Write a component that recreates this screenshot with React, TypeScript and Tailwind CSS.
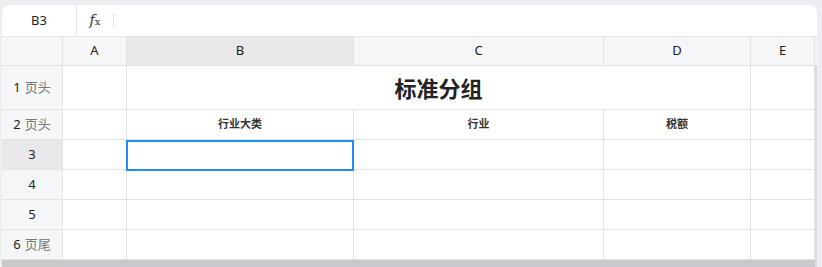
import React from "react";

const cols = [
  { key: "A", w: 64 },
  { key: "B", w: 227 },
  { key: "C", w: 250 },
  { key: "D", w: 147 },
  { key: "E", w: 64 },
];

const rows = [
  { n: "1", label: "页头", h: 44 },
  { n: "2", label: "页头", h: 30 },
  { n: "3", label: "", h: 30 },
  { n: "4", label: "", h: 30 },
  { n: "5", label: "", h: 30 },
  { n: "6", label: "页尾", h: 30 },
];

export default function App() {
  const font = { fontFamily: '"Noto Sans", "Noto Sans CJK SC", sans-serif' };
  return (
    <div className="w-[822px] h-[267px] bg-[#edeef1] overflow-hidden pt-[5px] pl-[2px]" style={font}>
      <div className="w-[815px] h-[262px] bg-white rounded-t-[8px] flex flex-col overflow-hidden">
        {/* formula bar */}
        <div className="h-[32px] flex items-center border-b border-[#e4e5e8]">
          <div className="w-[75px] h-full flex items-center justify-center border-r border-[#e4e5e8] text-[13px] text-[#222]">
            B3
          </div>
          <div className="w-[36px] flex items-center justify-center text-[#333]">
            <span className="italic text-[14px]" style={{ fontFamily: '"DejaVu Serif", serif' }}>f</span>
            <span className="text-[10px] mt-[2px]" style={{ fontFamily: '"DejaVu Serif", serif' }}>x</span>
          </div>
          <div className="w-px h-[16px] bg-[#e4e5e8]" />
        </div>
        {/* grid */}
        <div className="flex-1 flex flex-col relative">
          {/* header row */}
          <div className="flex h-[29px] bg-[#f5f6f8] border-b border-[#e2e3e6]">
            <div className="w-[61px] border-r border-[#e2e3e6]" />
            {cols.map((c) => (
              <div
                key={c.key}
                className={`flex items-center justify-center border-r border-[#e2e3e6] text-[13px] text-[#222] ${c.key === "B" ? "bg-[#e8e8ea]" : ""}`}
                style={{ width: c.w }}
              >
                {c.key}
              </div>
            ))}
          </div>
          {rows.map((r) => (
            <div key={r.n} className="flex border-b border-[#e2e3e6]" style={{ height: r.h }}>
              <div
                className={`w-[61px] flex items-center justify-center border-r border-[#e2e3e6] text-[13px] ${r.n === "3" ? "bg-[#e8e8ea]" : "bg-[#f5f6f8]"}`}
              >
                <span className="text-[#222]">{r.n}</span>
                {r.label && <span className="ml-[4px] text-[#777]">{r.label}</span>}
              </div>
              {r.n === "1" ? (
                <>
                  <div className="w-[64px] border-r border-[#e2e3e6]" />
                  <div className="w-[624px] flex items-center justify-center pt-[2px] border-r border-[#e2e3e6] text-[22px] font-bold text-[#222]">
                    标准分组
                  </div>
                  <div className="w-[64px] border-r border-[#e2e3e6]" />
                </>
              ) : (
                cols.map((c) => (
                  <div
                    key={c.key}
                    className="flex items-center justify-center border-r border-[#e2e3e6] text-[11px] font-bold text-[#333]"
                    style={{ width: c.w }}
                  >
                    {r.n === "2" && c.key === "B" ? "行业大类" : ""}
                    {r.n === "2" && c.key === "C" ? "行业" : ""}
                    {r.n === "2" && c.key === "D" ? "税额" : ""}
                  </div>
                ))
              )}
            </div>
          ))}
          {/* selection */}
          <div className="absolute left-[124px] top-[103px] w-[228px] h-[31px] border-2 border-[#1f8efa] pointer-events-none" />
          <div className="absolute right-0 top-[29px] bottom-0 w-[2px] bg-[#dcdde0]" />
          <div className="flex-1 bg-[#c8c9cc]" />
        </div>
      </div>
    </div>
  );
}
